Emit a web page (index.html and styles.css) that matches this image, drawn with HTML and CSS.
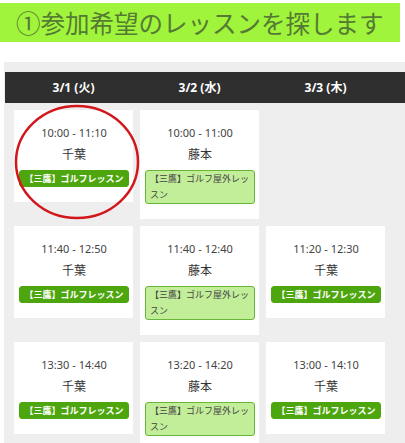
FILE: index.html
```html
<!DOCTYPE html>
<html>
<head>
	<meta charset="utf-8" />
	<title>レッスン検索</title>
	<link rel="stylesheet" href="styles.css">
</head>
<body>
	<h2 class="step_title">①参加希望のレッスンを探します</h2>
	<div class="schedule">
		<div class="day_head">
			<span>3/1 (火)</span>
			<span>3/2 (水)</span>
			<span>3/3 (木)</span>
		</div>
		<div class="lesson_row">
			<div class="lesson">
				<p class="time">10:00 - 11:10</p>
				<p class="coach">千葉</p>
				<div class="tag">【三鷹】ゴルフレッスン</div>
			</div>
			<div class="lesson">
				<p class="time">10:00 - 11:00</p>
				<p class="coach">藤本</p>
				<div class="tag tag_light">【三鷹】ゴルフ屋外レッスン</div>
			</div>
		</div>
		<div class="lesson_row">
			<div class="lesson">
				<p class="time">11:40 - 12:50</p>
				<p class="coach">千葉</p>
				<div class="tag">【三鷹】ゴルフレッスン</div>
			</div>
			<div class="lesson">
				<p class="time">11:40 - 12:40</p>
				<p class="coach">藤本</p>
				<div class="tag tag_light">【三鷹】ゴルフ屋外レッスン</div>
			</div>
			<div class="lesson">
				<p class="time">11:20 - 12:30</p>
				<p class="coach">千葉</p>
				<div class="tag">【三鷹】ゴルフレッスン</div>
			</div>
		</div>
		<div class="lesson_row">
			<div class="lesson">
				<p class="time">13:30 - 14:40</p>
				<p class="coach">千葉</p>
				<div class="tag">【三鷹】ゴルフレッスン</div>
			</div>
			<div class="lesson">
				<p class="time">13:20 - 14:20</p>
				<p class="coach">藤本</p>
				<div class="tag tag_light">【三鷹】ゴルフ屋外レッスン</div>
			</div>
			<div class="lesson">
				<p class="time">13:00 - 14:10</p>
				<p class="coach">千葉</p>
				<div class="tag">【三鷹】ゴルフレッスン</div>
			</div>
		</div>
		<!-- 赤い丸 -->
		<svg class="mark" width="126" height="116" viewBox="0 0 126 116">
			<ellipse cx="63" cy="58" rx="61" ry="56" fill="none" stroke="#d3161b" stroke-width="2.5" />
		</svg>
	</div>
</body>
</html>
```

FILE: styles.css
```css
body{
	margin: 0;
	font-family: "Noto Sans", "Noto Sans CJK JP", sans-serif;
	color: #333;
	background: #fff;
}
.step_title{
	width: 384px;
	height: 39px;
	margin: 3px 0 0 0;
	padding-left: 16px;
	background-color: #a0f43c;
	color: #557a33;
	font-family: "Noto Sans CJK JP", sans-serif;
	font-size: 24.5px;
	font-weight: 400;
	line-height: 39px;
	white-space: nowrap;
}
.schedule{
	position: relative;
	margin: 20px 0 0 4px;
	padding: 10px 0 20px 1px;
	background-color: #eeeeee;
	height: 371px;
	overflow: hidden;
}
.day_head{
	display: grid;
	grid-template-columns: repeat(3, 119px);
	column-gap: 7px;
	padding-left: 9px;
	height: 31px;
	background-color: #2f2f2f;
	color: #fff;
	font-size: 12px;
	font-weight: bold;
	line-height: 31px;
	text-align: center;
}
.lesson_row{
	display: grid;
	grid-template-columns: repeat(3, 119px);
	column-gap: 7px;
	align-items: start;
	padding-left: 9px;
	margin-top: 7px;
}
.lesson{
	background-color: #fff;
	padding: 14px 4px 15px 5px;
	text-align: center;
}
.lesson p{
	margin: 0;
	line-height: 18px;
}
.time{
	font-size: 11px;
	color: #444;
}
.coach{
	margin-top: 4px !important;
	font-size: 12px;
	color: #333;
}
.tag{
	margin-top: 6px;
	padding: 0 4px;
	border: 1px solid #4ea60f;
	border-radius: 3px;
	background-color: #4ea60f;
	color: #fff;
	font-family: "Noto Sans CJK JP", sans-serif;
	font-size: 9px;
	font-weight: bold;
	line-height: 15px;
	white-space: nowrap;
}
.tag_light{
	background-color: #c2ee9a;
	border-color: #69b53a;
	color: #444;
	font-weight: normal;
	text-align: left;
	white-space: normal;
	line-height: 16px;
}
.mark{
	position: absolute;
	left: 10px;
	top: 42px;
}
```
